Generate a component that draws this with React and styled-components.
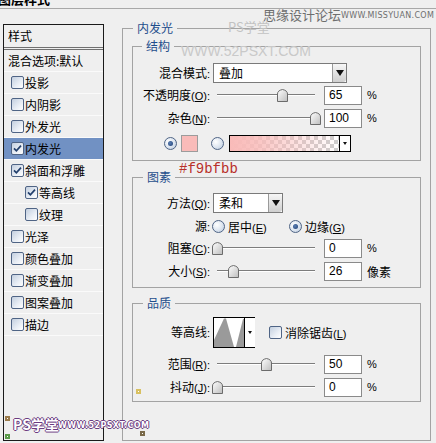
import styled, { createGlobalStyle } from "styled-components";

const GlobalStyle = createGlobalStyle`
  html, body { margin: 0; padding: 0; background: #efefef; }
  body {
    font-family: "Noto Sans CJK SC", "Liberation Sans", sans-serif;
    font-size: 12px;
    color: #000;
  }
`;

const Dialog = styled.div`
  position: relative;
  width: 436px;
  height: 443px;
  overflow: hidden;
  background: #efefef;
`;

const TitleStrip = styled.div`
  height: 8px;
  overflow: hidden;
  display: flex;
  align-items: flex-end;
  border-bottom: 1px solid #a8a8a8;
  font-weight: bold;
  font-size: 13px;
  line-height: 14px;
`;

const TitleText = styled.span`
  margin-left: -2px;
  margin-bottom: 2px;
`;

const Body = styled.div`
  display: flex;
  align-items: flex-start;
`;

/* ---------- left list ---------- */

const StyleList = styled.div`
  box-sizing: border-box;
  width: 101px;
  height: 417px;
  margin: 15px 0 0 3px;
  border: 1px solid #1a1a1a;
  display: flex;
  flex-direction: column;
`;

const ListHeader = styled.div`
  height: 22px;
  line-height: 22px;
  padding-left: 4px;
  border-bottom: 3px double #707070;
`;

const ListRow = styled.div`
  height: 21px;
  display: flex;
  align-items: center;
  gap: 1px;
  padding-left: ${(p) => (p.$plain ? 4 : p.$indent ? 21 : 7)}px;
  border-bottom: 1px solid #fafafa;
  background: ${(p) => (p.$active ? "#7191c3" : "transparent")};
  white-space: nowrap;
`;

const Box = styled.span`
  box-sizing: border-box;
  width: 13px;
  height: 13px;
  flex-shrink: 0;
  border: 1px solid #4f6485;
  border-radius: 2px;
  background: linear-gradient(135deg, #c3cfdf 0%, #e9eef5 60%, #ffffff 100%);
  display: flex;
  align-items: center;
  justify-content: center;
`;

const Check = ({ on }) => (
  <Box>
    {on && (
      <svg width="11" height="11" viewBox="0 0 11 11">
        <path d="M2 5.3 L4.4 7.8 L9 2.6" fill="none" stroke="#223f6c" strokeWidth="1.7" />
      </svg>
    )}
  </Box>
);

const Radio = styled.span`
  box-sizing: border-box;
  width: 13px;
  height: 13px;
  flex-shrink: 0;
  margin-left: ${(p) => p.$ml || 0}px;
  border: 1px solid #4f6485;
  border-radius: 50%;
  background: radial-gradient(circle at 35% 35%, #ffffff 0%, #dfe7f1 50%, #b9c8dc 100%);
  display: flex;
  align-items: center;
  justify-content: center;
  &::after {
    content: "";
    width: 5px;
    height: 5px;
    border-radius: 50%;
    background: ${(p) => (p.$on ? "radial-gradient(circle at 40% 40%, #5a7fb5, #1f3f73)" : "transparent")};
  }
`;

/* ---------- right panel ---------- */

const Outer = styled.fieldset`
  box-sizing: border-box;
  width: 309px;
  height: 421px;
  margin: 11px 0 0 18px;
  padding: 0;
  min-width: 0;
  border: 1px solid #a3a3a3;
`;

const Group = styled.fieldset`
  box-sizing: border-box;
  height: ${(p) => p.$h}px;
  margin: ${(p) => p.$mt}px 9px 0 9px;
  padding: 0;
  min-width: 0;
  border: 1px solid #a3a3a3;
`;

const GroupTitle = styled.legend`
  position: relative;
  margin-left: ${(p) => p.$ml}px;
  padding: 0 4px;
  color: #1f4e8c;
  font-size: 12px;
  line-height: 16px;
`;

const HexNote = styled.span`
  position: absolute;
  left: calc(100% + 4px);
  top: -8px;
  font-family: "Liberation Mono", "Courier New", monospace;
  font-size: 14px;
  line-height: 16px;
  color: #b8302a;
  white-space: nowrap;
`;

const Row = styled.div`
  display: flex;
  align-items: center;
  height: ${(p) => p.$h || 20}px;
  margin-top: ${(p) => p.$mt || 0}px;
  white-space: nowrap;
`;

const Label = styled.div`
  width: 77px;
  flex-shrink: 0;
  text-align: right;
  line-height: 16px;
`;

const Latin = styled.span`
  font-family: "Liberation Sans", Arial, sans-serif;
  font-size: 11px;
`;

const Hot = styled.span`
  text-decoration: underline;
`;

const Key = ({ k, colon = true }) => (
  <Latin>
    (<Hot>{k}</Hot>){colon ? ":" : ""}
  </Latin>
);

const Select = styled.div`
  box-sizing: border-box;
  display: flex;
  width: ${(p) => p.$w}px;
  height: 20px;
  margin-left: 3px;
  border: 1px solid #7a7a7a;
  background: #fff;
`;

const SelectText = styled.div`
  flex: 1;
  padding-left: 5px;
  line-height: 18px;
`;

const DropBtn = styled.div`
  width: 13px;
  border-left: 1px solid #9a9a9a;
  border-radius: 0 3px 3px 0;
  background: linear-gradient(#f6f6f6, #cfcfcf);
  display: flex;
  align-items: center;
  justify-content: center;
  &::after {
    content: "";
    border-left: 4px solid transparent;
    border-right: 4px solid transparent;
    border-top: 6px solid #111;
  }
`;

const SmallDrop = styled.div`
  width: ${(p) => p.$w}px;
  flex-shrink: 0;
  border-left: 1px solid #000;
  background: #fff;
  display: flex;
  align-items: center;
  justify-content: center;
  &::after {
    content: "";
    border-left: 2.5px solid transparent;
    border-right: 2.5px solid transparent;
    border-top: 3px solid #111;
  }
`;

const SliderWrap = styled.div`
  position: relative;
  width: 98px;
  height: 16px;
  margin-left: 7px;
  flex-shrink: 0;
  display: flex;
  align-items: center;
`;

const Track = styled.div`
  width: 100%;
  height: 1px;
  background: #7d7d7d;
  border-bottom: 1px solid #ffffff;
`;

const ThumbHolder = styled.div`
  position: absolute;
  top: 1px;
  width: 11px;
  height: 13px;
`;

const Slider = ({ pos }) => (
  <SliderWrap>
    <Track />
    <ThumbHolder style={{ left: `${Math.round(pos * 98) - 5}px` }}>
      <svg width="11" height="13" viewBox="0 0 11 13">
        <defs>
          <linearGradient id="tg" x1="0" y1="0" x2="1" y2="1">
            <stop offset="0" stopColor="#ffffff" />
            <stop offset="1" stopColor="#bdbdbd" />
          </linearGradient>
        </defs>
        <path d="M0.5 12.5 V5 Q0.5 1.5 5.5 0.5 Q10.5 1.5 10.5 5 V12.5 Z" fill="url(#tg)" stroke="#6b6b6b" />
      </svg>
    </ThumbHolder>
  </SliderWrap>
);

const NumBox = styled.div`
  box-sizing: border-box;
  width: 38px;
  height: 19px;
  margin-left: 9px;
  padding-left: 4px;
  border: 1px solid #8a8a8a;
  background: #fff;
  font-family: "Liberation Sans", Arial, sans-serif;
  font-size: 12px;
  line-height: 17px;
  flex-shrink: 0;
`;

const Unit = styled.span`
  margin-left: 5px;
  font-family: ${(p) => (p.$cjk ? '"Noto Sans CJK SC", sans-serif' : '"Liberation Sans", Arial, sans-serif')};
  font-size: ${(p) => (p.$cjk ? 12 : 11)}px;
`;

const Swatch = styled.div`
  box-sizing: border-box;
  width: 17px;
  height: 17px;
  margin-left: 4px;
  border: 1px solid #9c9c9c;
  background: #f9bbb9;
`;

const GradientPick = styled.div`
  box-sizing: border-box;
  display: flex;
  width: 122px;
  height: 17px;
  margin-left: 5px;
  border: 1px solid #000;
`;

const GradientFill = styled.div`
  flex: 1;
  background:
    linear-gradient(to right, rgba(249, 187, 185, 1), rgba(249, 187, 185, 0.85) 25%, rgba(249, 187, 185, 0)),
    repeating-conic-gradient(#cdcdcd 0 25%, #ffffff 0 50%) 0 0 / 8px 8px;
`;

const Contour = styled.div`
  box-sizing: border-box;
  display: flex;
  width: 42px;
  height: 31px;
  margin-left: 3px;
  border: 1px solid #000;
  background: #fff;
`;

const ContourArt = styled.div`
  width: 30px;
  display: flex;
`;

const OptionText = styled.span`
  margin-left: 3px;
`;

const Option = styled.div`
  display: flex;
  align-items: center;
  width: ${(p) => p.$w || "auto"};
  margin-left: ${(p) => p.$ml || 0}px;
`;

/* ---------- watermarks (lie over the dialog) ---------- */

const Mark = styled.div`
  position: absolute;
  left: ${(p) => p.$x}px;
  top: ${(p) => p.$y}px;
  white-space: nowrap;
  pointer-events: none;
  font-size: ${(p) => p.$size}px;
  color: ${(p) => p.$color};
  font-family: ${(p) => p.$font || '"Noto Sans CJK SC", sans-serif'};
  letter-spacing: ${(p) => p.$ls || 0}px;
  line-height: 1;
`;

const OutlineMark = styled(Mark)`
  color: #ffffff;
  font-weight: bold;
  text-shadow: 1px 0 #6a3b80, -1px 0 #6a3b80, 0 1px #6a3b80, 0 -1px #6a3b80;
`;

const Corner = styled.div`
  position: absolute;
  left: ${(p) => p.$x}px;
  top: ${(p) => p.$y}px;
  width: 5px;
  height: 5px;
  box-sizing: border-box;
  border: 2px solid ${(p) => p.$color};
  background: #fff;
`;

const items = [
  { label: "投影" },
  { label: "内阴影" },
  { label: "外发光" },
  { label: "内发光", checked: true, active: true },
  { label: "斜面和浮雕", checked: true },
  { label: "等高线", checked: true, indent: true },
  { label: "纹理", indent: true },
  { label: "光泽" },
  { label: "颜色叠加" },
  { label: "渐变叠加" },
  { label: "图案叠加" },
  { label: "描边" },
];

export default function App() {
  return (
    <Dialog>
      <GlobalStyle />
      <TitleStrip>
        <TitleText>图层样式</TitleText>
      </TitleStrip>
      <Body>
        <StyleList>
          <ListHeader>样式</ListHeader>
          <ListRow $plain>混合选项:默认</ListRow>
          {items.map((it) => (
            <ListRow key={it.label} $indent={it.indent} $active={it.active}>
              <Check on={it.checked} />
              <span>{it.label}</span>
            </ListRow>
          ))}
        </StyleList>

        <Outer>
          <GroupTitle $ml={10}>内发光</GroupTitle>

          <Group $mt={2} $h={123}>
            <GroupTitle $ml={9}>结构</GroupTitle>
            <Row $mt={9}>
              <Label>
                混合模式<Latin>:</Latin>
              </Label>
              <Select $w={134}>
                <SelectText>叠加</SelectText>
                <DropBtn />
              </Select>
            </Row>
            <Row $mt={2}>
              <Label>
                不透明度<Key k="O" />
              </Label>
              <Slider pos={0.66} />
              <NumBox>65</NumBox>
              <Unit>%</Unit>
            </Row>
            <Row $mt={3}>
              <Label>
                杂色<Key k="N" />
              </Label>
              <Slider pos={1} />
              <NumBox>100</NumBox>
              <Unit>%</Unit>
            </Row>
            <Row $mt={6} $h={18}>
              <Radio $ml={31} $on />
              <Swatch />
              <Radio $ml={13} />
              <GradientPick>
                <GradientFill />
                <SmallDrop $w={10} />
              </GradientPick>
            </Row>
          </Group>

          <Group $mt={8} $h={119}>
            <GroupTitle $ml={10}>
              图素
              <HexNote>#f9bfbb</HexNote>
            </GroupTitle>
            <Row $mt={8}>
              <Label>
                方法<Key k="Q" />
              </Label>
              <Select $w={70}>
                <SelectText>柔和</SelectText>
                <DropBtn />
              </Select>
            </Row>
            <Row $mt={5} $h={16}>
              <Label>
                源<Latin>:</Latin>
              </Label>
              <Option $w="77px" $ml={2}>
                <Radio />
                <OptionText>
                  居中<Key k="E" colon={false} />
                </OptionText>
              </Option>
              <Option>
                <Radio $on />
                <OptionText>
                  边缘<Key k="G" colon={false} />
                </OptionText>
              </Option>
            </Row>
            <Row $mt={4}>
              <Label>
                阻塞<Key k="C" />
              </Label>
              <Slider pos={0} />
              <NumBox>0</NumBox>
              <Unit>%</Unit>
            </Row>
            <Row $mt={3}>
              <Label>
                大小<Key k="S" />
              </Label>
              <Slider pos={0.165} />
              <NumBox>26</NumBox>
              <Unit $cjk>像素</Unit>
            </Row>
          </Group>

          <Group $mt={7} $h={107}>
            <GroupTitle $ml={10}>品质</GroupTitle>
            <Row $mt={6} $h={31}>
              <Label>
                等高线<Latin>:</Latin>
              </Label>
              <Contour>
                <ContourArt>
                  <svg width="30" height="29" viewBox="0 0 30 29">
                    <path d="M0 29 V22 L10 0.5 L12 0.5 L20 29 Z" fill="#9a9a9a" />
                    <path d="M22 29 L29 1 L30 1 V29 Z" fill="#9a9a9a" />
                  </svg>
                </ContourArt>
                <SmallDrop $w={10} />
              </Contour>
              <Option $ml={14}>
                <Check />
                <OptionText>
                  消除锯齿<Key k="L" colon={false} />
                </OptionText>
              </Option>
            </Row>
            <Row $mt={6}>
              <Label>
                范围<Key k="R" />
              </Label>
              <Slider pos={0.5} />
              <NumBox>50</NumBox>
              <Unit>%</Unit>
            </Row>
            <Row $mt={3}>
              <Label>
                抖动<Key k="J" />
              </Label>
              <Slider pos={0} />
              <NumBox>0</NumBox>
              <Unit>%</Unit>
            </Row>
          </Group>
        </Outer>
      </Body>

      <Mark $x={263} $y={8} $size={13} $color="#6e6e6e">思缘设计论坛</Mark>
      <Mark $x={341} $y={12} $size={8} $color="#6e6e6e" $font='"DejaVu Sans", sans-serif' $ls={0.3}>
        WWW.MISSYUAN.COM
      </Mark>
      <Mark $x={228} $y={20} $size={13} $color="#c2c2c2">PS学堂</Mark>
      <Mark $x={181} $y={44} $size={14} $color="#c9c9c9" $font='"Liberation Sans", Arial, sans-serif'>
        WWW.52PSXT.COM
      </Mark>

      <Corner $x={5} $y={416} $color="#9a7a4a" />
      <Corner $x={5} $y={434} $color="#5a9a4a" />
      <OutlineMark $x={13} $y={417} $size={14}>PS学堂</OutlineMark>
      <OutlineMark $x={58} $y={422} $size={8} $font='"DejaVu Sans", sans-serif' $ls={0.4}>
        WWW.52PSXT.COM
      </OutlineMark>
      <Corner $x={136} $y={389} $color="#d8c060" />
      <Corner $x={140} $y={431} $color="#7a6a4a" />
    </Dialog>
  );
}
